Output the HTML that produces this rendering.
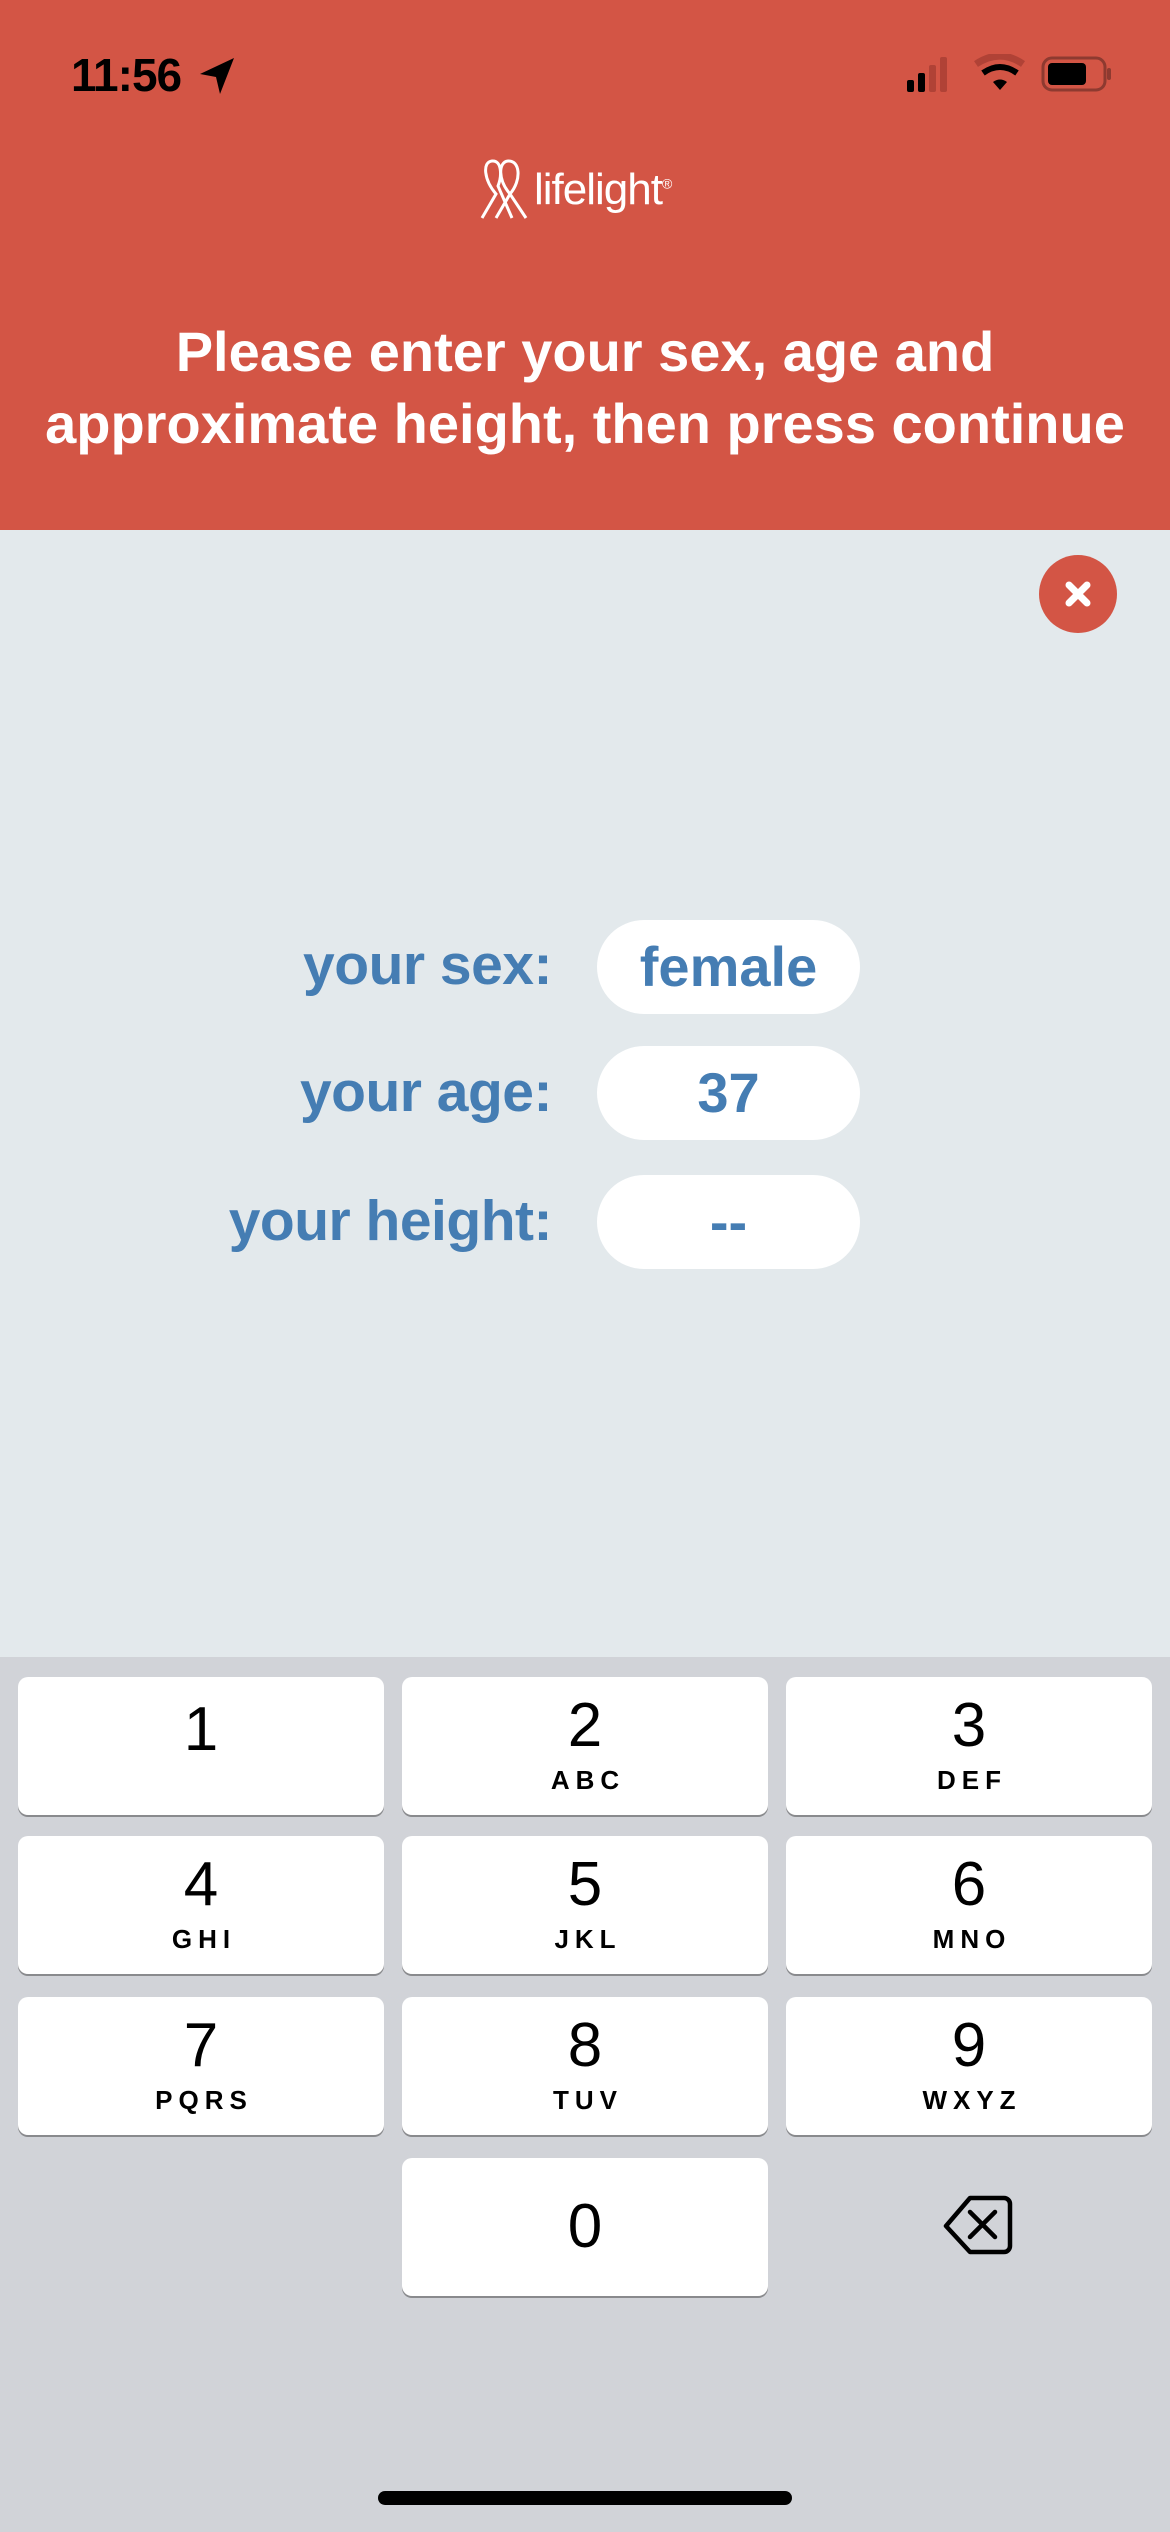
<!DOCTYPE html>
<html><head><meta charset="utf-8"><style>
*{margin:0;padding:0;box-sizing:border-box}
body{width:1170px;height:2532px;position:relative;background:#E3E9EC;font-family:"Liberation Sans",sans-serif;overflow:hidden}
.hdr{position:absolute;left:0;top:0;width:1170px;height:530px;background:#D35545}
.time{position:absolute;left:71px;top:48px;font-size:46px;font-weight:bold;color:#000;letter-spacing:-1px}
.title{position:absolute;left:0;width:1170px;top:316px;text-align:center;color:#fff;font-weight:bold;font-size:56px;line-height:72px}
.logo{position:absolute;color:#fff}
.close{position:absolute;left:1039px;top:555px;width:78px;height:78px;border-radius:50%;background:#D35545}
.lbl{position:absolute;right:618px;color:#457DB3;font-weight:bold;font-size:57px;letter-spacing:-0.5px}
.pill{position:absolute;left:597px;width:263px;height:94px;border-radius:47px;background:#fff;color:#457DB3;font-weight:bold;font-size:56px;text-align:center;line-height:94px}
.kb{position:absolute;left:0;top:1657px;width:1170px;height:875px;background:#D1D3D8}
.key{position:absolute;width:366px;height:138px;background:#fff;border-radius:10px;box-shadow:0 2px 0 #898A8D;text-align:center}
.key .n{font-size:62px;line-height:62px;margin-top:18px;color:#000}
.key .l{font-size:26px;font-weight:bold;letter-spacing:6px;color:#000;margin-top:8px;padding-left:6px}
.home{position:absolute;left:378px;top:2491px;width:414px;height:14px;border-radius:7px;background:#000}
</style></head><body>
<div class="hdr">
<div class="time">11:56</div>
<svg style="position:absolute;left:198px;top:56px" width="40" height="40" viewBox="0 0 40 40"><path d="M36 2 L2 18 L18 21 L22 38 Z" fill="#000"/></svg>
<svg style="position:absolute;left:905px;top:54px" width="210" height="40" viewBox="0 0 210 40">
<rect x="2" y="26" width="7" height="12" rx="2" fill="#000"/><rect x="13" y="19" width="7" height="19" rx="2" fill="#000"/><rect x="24" y="11" width="7" height="27" rx="2" fill="#B04236"/><rect x="35" y="3" width="7" height="35" rx="2" fill="#B04236"/>
<path d="M71 10 Q95 -6 118 10" stroke="#B04236" stroke-width="7" fill="none"/><path d="M78 19 Q95 7 112 19" stroke="#000" stroke-width="6" fill="none"/><path d="M88 28 L95 36 L102 28 Q95 23 88 28Z" fill="#000"/>
<rect x="138" y="4" width="62" height="32" rx="9" fill="none" stroke="#8E3A30" stroke-width="3"/><rect x="143" y="9" width="38" height="22" rx="4" fill="#000"/><rect x="202" y="14" width="4" height="12" rx="2" fill="#8E3A30"/>
</svg>
<svg style="position:absolute;left:478px;top:158px" width="52" height="62" viewBox="0 0 52 62" fill="none" stroke="#fff" stroke-width="3"><path d="M4 60 L18 36 C6 22 4 4 14 3 C24 2 24 18 20 28 L34 60"/><path d="M18 60 L32 36 C20 22 20 4 30 3 C42 2 44 22 32 36 L48 60"/></svg>
<div class="logo" style="left:534px;top:165px;font-size:44px;letter-spacing:-1px">lifelight<sup style="font-size:14px">®</sup></div>
<div class="title">Please enter your sex, age and<br>approximate height, then press continue</div>
</div>
<div class="close"><svg width="78" height="78" viewBox="0 0 78 78"><path d="M30 30 L48 48 M48 30 L30 48" stroke="#fff" stroke-width="7" stroke-linecap="round"/></svg></div>
<div class="lbl" style="top:932px">your sex:</div><div class="pill" style="top:920px">female</div>
<div class="lbl" style="top:1059px">your age:</div><div class="pill" style="top:1046px">37</div>
<div class="lbl" style="top:1188px">your height:</div><div class="pill" style="top:1175px">--</div>
<div class="kb"></div>
<div class="key" style="left:18px;top:1677px"><div class="n" style="margin-top:22px">1</div></div>
<div class="key" style="left:402px;top:1677px"><div class="n">2</div><div class="l">ABC</div></div>
<div class="key" style="left:786px;top:1677px"><div class="n">3</div><div class="l">DEF</div></div>
<div class="key" style="left:18px;top:1836px"><div class="n">4</div><div class="l">GHI</div></div>
<div class="key" style="left:402px;top:1836px"><div class="n">5</div><div class="l">JKL</div></div>
<div class="key" style="left:786px;top:1836px"><div class="n">6</div><div class="l">MNO</div></div>
<div class="key" style="left:18px;top:1997px"><div class="n">7</div><div class="l">PQRS</div></div>
<div class="key" style="left:402px;top:1997px"><div class="n">8</div><div class="l">TUV</div></div>
<div class="key" style="left:786px;top:1997px"><div class="n">9</div><div class="l">WXYZ</div></div>
<div class="key" style="left:402px;top:2158px"><div class="n" style="margin-top:38px">0</div></div>
<svg style="position:absolute;left:940px;top:2194px" width="76" height="64" viewBox="0 0 76 64" fill="none" stroke="#000" stroke-width="4.5" stroke-linejoin="round" stroke-linecap="round"><path d="M30 4 H64 A6 6 0 0 1 70 10 V52 A6 6 0 0 1 64 58 H30 L6 32 Z"/><path d="M30 18 L55 43 M55 18 L30 43"/></svg>
<div class="home"></div>
</body></html>
